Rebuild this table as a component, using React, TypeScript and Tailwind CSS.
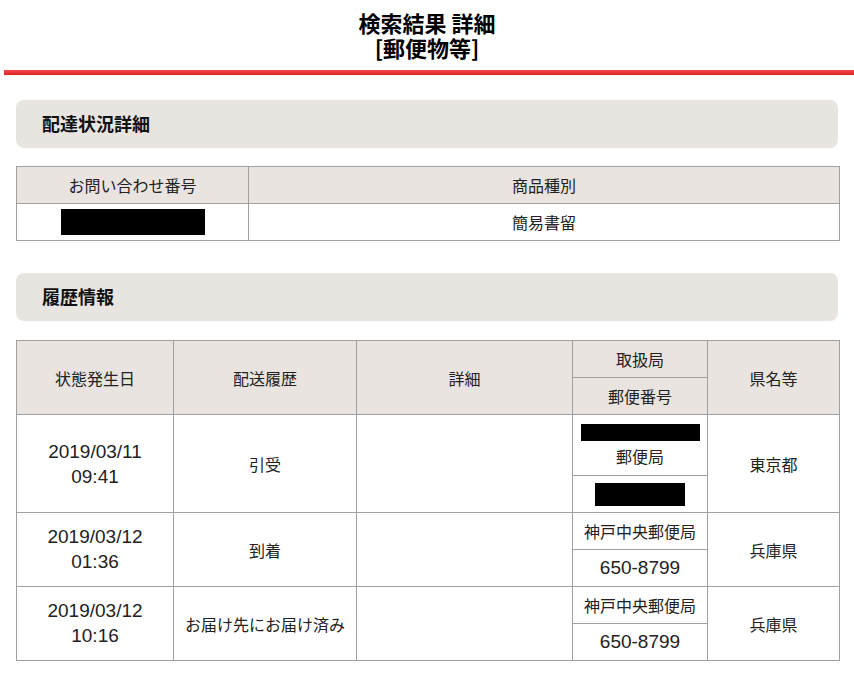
import React from 'react';

const cell = 'border border-[#a0a0a0] text-center align-middle p-0';
const head = `${cell} bg-[#e9e4e0] font-normal`;

function Num({ children }: { children: React.ReactNode }) {
  return <span className="font-['Liberation_Sans',Arial,sans-serif] text-[19px]">{children}</span>;
}

function Redacted({ w, h }: { w: string; h: string }) {
  return <div className={`mx-auto bg-black ${w} ${h}`} />;
}

function SectionTitle({ children }: { children: React.ReactNode }) {
  return (
    <div className="mx-4 h-[48px] rounded-lg bg-[#e8e4e0] pl-[26px] flex items-center">
      <h2 className="text-[18px] font-bold text-[#111] -mt-[1px]">{children}</h2>
    </div>
  );
}

const history = [
  { date: '2019/03/12', time: '01:36', status: '到着', office: '神戸中央郵便局', zip: '650-8799', pref: '兵庫県' },
  { date: '2019/03/12', time: '10:16', status: 'お届け先にお届け済み', office: '神戸中央郵便局', zip: '650-8799', pref: '兵庫県' },
];

export default function App() {
  return (
    <div className="w-[854px] min-h-[676px] bg-white text-[#222] text-[16px] font-['Noto_Sans_CJK_JP','Noto_Sans',sans-serif]">
      <div className="pt-[10px] text-center text-[22px] font-bold leading-[25px] text-black">
        <div>検索結果 詳細</div>
        <div>[郵便物等]</div>
      </div>
      <div className="mt-[10px] ml-[4px] h-[5px] bg-gradient-to-b from-[#f24a4a] to-[#dd1c1c]" />

      <div className="mt-[25px]">
        <SectionTitle>配達状況詳細</SectionTitle>
      </div>

      <table className="mx-4 mt-[18px] w-[824px] border-collapse table-fixed">
        <colgroup>
          <col className="w-[232px]" />
          <col />
        </colgroup>
        <tbody>
          <tr>
            <th className={`${head} h-[37px]`}>お問い合わせ番号</th>
            <th className={`${head} h-[37px]`}>商品種別</th>
          </tr>
          <tr>
            <td className={`${cell} h-[37px]`}>
              <Redacted w="w-[144px]" h="h-[26px]" />
            </td>
            <td className={`${cell} h-[37px]`}>簡易書留</td>
          </tr>
        </tbody>
      </table>

      <div className="mt-[32px]">
        <SectionTitle>履歴情報</SectionTitle>
      </div>

      <table className="mx-4 mt-[19px] w-[824px] border-collapse table-fixed">
        <colgroup>
          <col className="w-[157px]" />
          <col className="w-[183px]" />
          <col className="w-[216px]" />
          <col className="w-[135px]" />
          <col />
        </colgroup>
        <tbody>
          <tr>
            <th rowSpan={2} className={head}>状態発生日</th>
            <th rowSpan={2} className={head}>配送履歴</th>
            <th rowSpan={2} className={head}>詳細</th>
            <th className={`${head} h-[37px]`}>取扱局</th>
            <th rowSpan={2} className={head}>県名等</th>
          </tr>
          <tr>
            <th className={`${head} h-[37px]`}>郵便番号</th>
          </tr>

          <tr>
            <td rowSpan={2} className={`${cell} leading-[24px]`}>
              <Num>2019/03/11</Num>
              <br />
              <Num>09:41</Num>
            </td>
            <td rowSpan={2} className={cell}>引受</td>
            <td rowSpan={2} className={cell}></td>
            <td className={`${cell} h-[61px]`}>
              <div className="flex flex-col items-center gap-[3px] pt-[1px]">
                <Redacted w="w-[119px]" h="h-[17px]" />
                <span className="leading-[24px]">郵便局</span>
              </div>
            </td>
            <td rowSpan={2} className={cell}>東京都</td>
          </tr>
          <tr>
            <td className={`${cell} h-[37px]`}>
              <Redacted w="w-[90px]" h="h-[23px]" />
            </td>
          </tr>

          {history.map((r, i) => (
            <React.Fragment key={i}>
              <tr>
                <td rowSpan={2} className={`${cell} leading-[24px] pb-[2px]`}>
                  <Num>{r.date}</Num>
                  <br />
                  <Num>{r.time}</Num>
                </td>
                <td rowSpan={2} className={cell}>{r.status}</td>
                <td rowSpan={2} className={cell}></td>
                <td className={`${cell} h-[37px]`}>{r.office}</td>
                <td rowSpan={2} className={cell}>{r.pref}</td>
              </tr>
              <tr>
                <td className={`${cell} h-[37px]`}>
                  <Num>{r.zip}</Num>
                </td>
              </tr>
            </React.Fragment>
          ))}
        </tbody>
      </table>
    </div>
  );
}
